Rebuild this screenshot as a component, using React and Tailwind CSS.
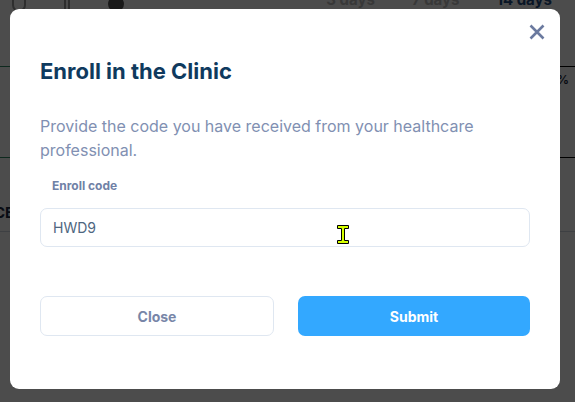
import React, { useState } from 'react';

const XIcon = () => (
  <svg width="16" height="16" viewBox="0 0 16 16" fill="none">
    <path d="M1.5 1.5 14.5 14.5M14.5 1.5 1.5 14.5" stroke="#6b7a9f" strokeWidth="2.6" />
  </svg>
);

const Cursor = () => (
  <svg width="12" height="19" viewBox="0 0 12 19" className="absolute left-[337px] top-[225px]">
    <path
      d="M0.5 0.5H11.5V3.5H7.5V15.5H11.5V18.5H0.5V15.5H4.5V3.5H0.5Z"
      fill="#d6ff00"
      stroke="#000"
      strokeWidth="1"
    />
  </svg>
);

const App = () => {
  const [code, setCode] = useState('HWD9');

  return (
    <div className="relative h-[402px] w-[575px] overflow-hidden bg-white font-['Inter',sans-serif]">
      {/* Page behind */}
      <div className="-mt-[12px] flex h-[24px] items-end px-[12px] text-[15px] font-bold leading-[24px]">
        <div className="flex items-end gap-[38px] text-[#999]">
          <span className="h-[18px] w-[14px] rounded-full border-2 border-[#999]" />
          <span className="h-[18px] w-[6px] rounded-full border-2 border-[#999]" />
          <span className="h-[16px] w-[16px] rounded-full bg-[#555]" />
        </div>
        <div className="ml-auto flex gap-[37px] pr-[11px]">
          <span className="text-[#bcbcbc]">3 days</span>
          <span className="text-[#bcbcbc]">7 days</span>
          <span className="text-[#1f4a80]">14 days</span>
        </div>
      </div>
      <div className="mt-[54px] flex h-px">
        <div className="w-1/2 bg-[#2f8a64]" />
        <div className="w-1/2 bg-black" />
      </div>
      <div className="flex justify-end pr-[6px] pt-[4px] text-[12px] font-bold text-[#1c2a44]">%</div>
      <div className="mt-[68px] flex h-px">
        <div className="w-1/2 bg-[#2f8a64]" />
        <div className="w-1/2 bg-black" />
      </div>
      <div className="ml-[-6px] mt-[44px] text-[15px] font-bold text-[#1c2a44]">CE</div>
      <div className="mt-[6px] h-px bg-[#cfd6e0]" />

      {/* Backdrop */}
      <div className="absolute inset-0 bg-black/70" />

      {/* Dialog */}
      <div className="absolute left-[10px] top-[9px] h-[380px] w-[550px] rounded-[9px] bg-white px-[30px]">
        <button className="absolute right-[15px] top-[15px]">
          <XIcon />
        </button>

        <h2 className="mt-[48px] text-[22px] font-bold leading-[28px] text-[#0f3a5e]">
          Enroll in the Clinic
        </h2>

        <p className="mt-[29px] text-[16px] leading-[24px] text-[#8190b2]">
          Provide the code you have received from your healthcare professional.
        </p>

        <label className="ml-[12px] mt-[16px] block text-[12px] font-bold leading-[16px] text-[#7081a6]">
          Enroll code
        </label>
        <input
          value={code}
          onChange={(e) => setCode(e.target.value)}
          className="mt-[14px] block h-[39px] w-full rounded-[7px] border border-[#dfe7f1] px-[12px] text-[14px] text-[#4e6680] outline-none"
        />

        <div className="mt-[49px] flex gap-[24px]">
          <button className="h-[40px] flex-1 rounded-[7px] border border-[#dfe7f1] text-[14px] font-bold text-[#7886a8]">
            Close
          </button>
          <button className="h-[40px] flex-1 rounded-[7px] bg-[#33a8ff] text-[14px] font-bold text-white">
            Submit
          </button>
        </div>
      </div>

      <Cursor />
    </div>
  );
};

export default App;
